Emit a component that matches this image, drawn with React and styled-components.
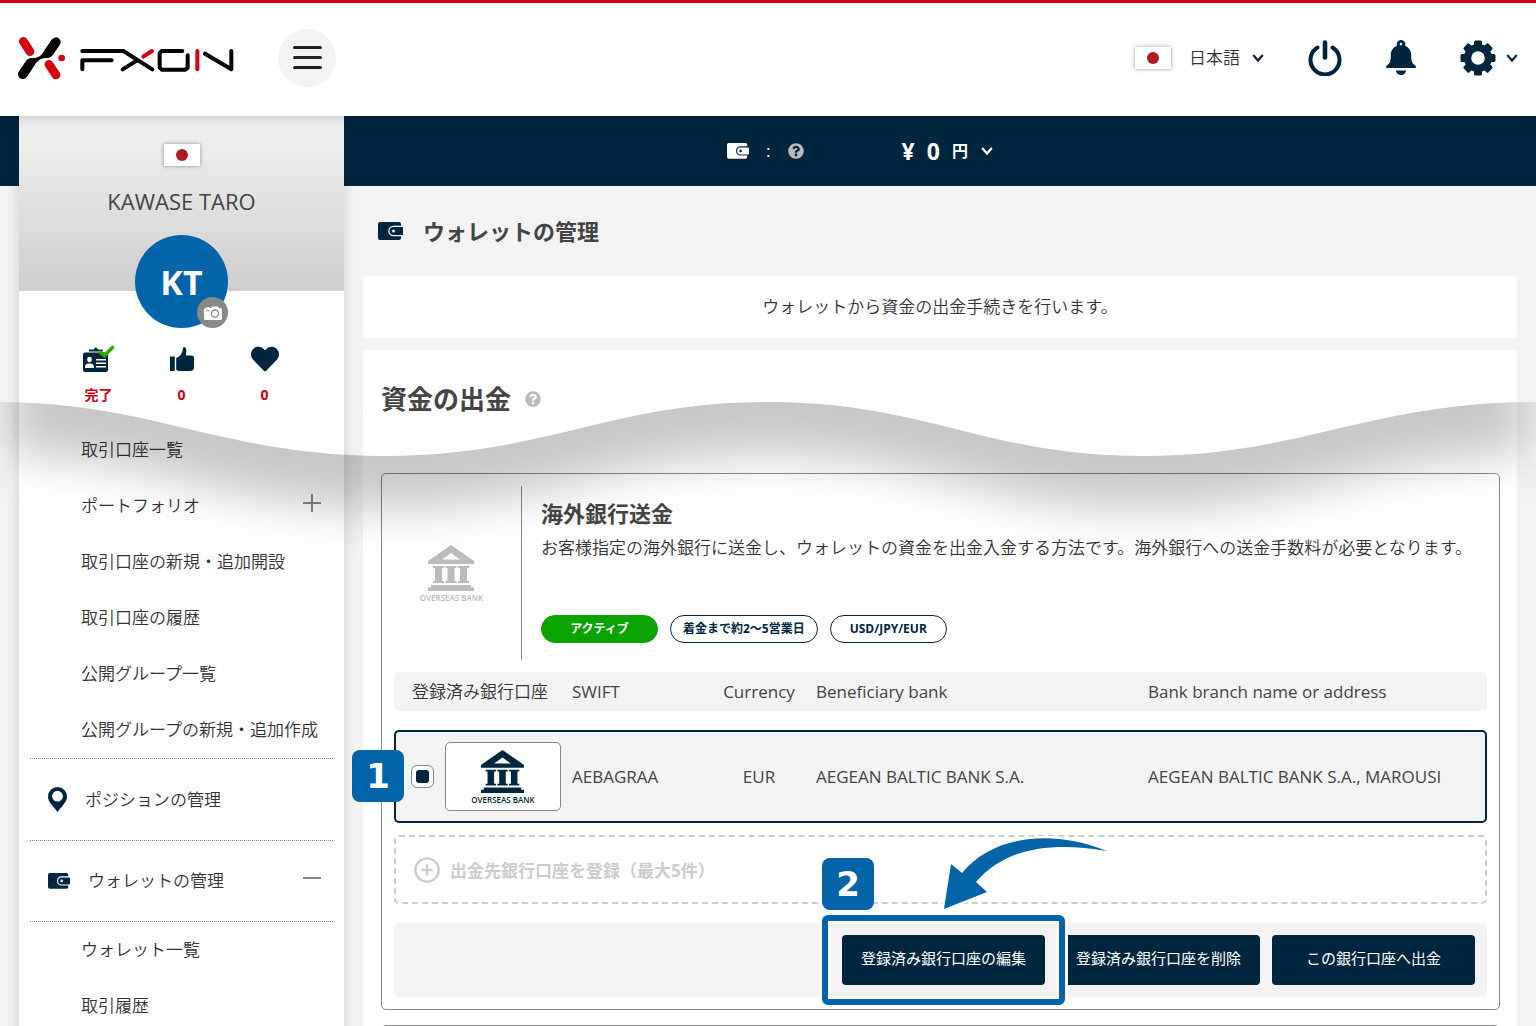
import styled, { createGlobalStyle } from "styled-components";
import { FaHeart, FaQuestionCircle } from "react-icons/fa";
import { CirclePlus } from "lucide-react";

const subMenu = [
  { label: "取引口座一覧" },
  { label: "ポートフォリオ", expandable: true },
  { label: "取引口座の新規・追加開設" },
  { label: "取引口座の履歴" },
  { label: "公開グループ一覧" },
  { label: "公開グループの新規・追加作成" },
];

const walletMenu = [{ label: "ウォレット一覧" }, { label: "取引履歴" }];

const accounts = [
  {
    swift: "AEBAGRAA",
    currency: "EUR",
    bank: "AEGEAN BALTIC BANK S.A.",
    branch: "AEGEAN BALTIC BANK S.A., MAROUSI",
  },
];

export default function App() {
  return (
    <Page>
      <GlobalStyle />
      <Header />
      <Body>
        <Sidebar />
        <Main>
          <BalanceBar>
            <BalanceLabel>
              <WalletIcon width="22" hole="#00263f" />
              <span>:</span>
              <HelpIcon size="16" />
            </BalanceLabel>
            <Balance>
              <strong>¥</strong>
              <strong>0</strong>
              <SelectBox>
                <CurrencySelect aria-label="通貨">
                  <option>円</option>
                </CurrencySelect>
                <Chevron />
              </SelectBox>
            </Balance>
          </BalanceBar>

          <PageTitle>
            <WalletIcon width="25" hole="#f3f3f3" />
            <h1>ウォレットの管理</h1>
          </PageTitle>

          <Notice>ウォレットから資金の出金手続きを行います。</Notice>

          <Panel>
            <PanelTitle>
              <h2>資金の出金</h2>
              <HelpIcon size="16" />
            </PanelTitle>
            <BankCard />
            <NextCard />
          </Panel>
        </Main>
      </Body>
      <WaveShadow />
    </Page>
  );
}

function Header() {
  return (
    <TopBar>
      <LogoLink href="#" aria-label="FXON">
        <Logo />
      </LogoLink>
      <MenuButton aria-label="メニュー">
        <span />
        <span />
        <span />
      </MenuButton>
      <HeaderTools>
        <Flag />
        <SelectBox>
          <LanguageSelect aria-label="言語">
            <option>日本語</option>
          </LanguageSelect>
          <Chevron />
        </SelectBox>
        <ToolButton aria-label="ログアウト">
          <PowerIcon />
        </ToolButton>
        <ToolButton aria-label="お知らせ">
          <BellIcon />
        </ToolButton>
        <ToolButton aria-label="設定">
          <GearIcon />
          <Chevron />
        </ToolButton>
      </HeaderTools>
    </TopBar>
  );
}

function Sidebar() {
  return (
    <Side>
      <Profile>
        <Flag />
        <UserName>KAWASE TARO</UserName>
        <Avatar>
          KT
          <CameraButton aria-label="写真を変更">
            <CameraIcon />
          </CameraButton>
        </Avatar>
      </Profile>

      <Stats>
        <Stat>
          <IdCardIcon />
          <span>完了</span>
        </Stat>
        <Stat>
          <ThumbIcon />
          <span>0</span>
        </Stat>
        <Stat>
          <FaHeart size={28} />
          <span>0</span>
        </Stat>
      </Stats>

      <Menu>
        {subMenu.map((item) => (
          <SubItem href="#" key={item.label}>
            {item.label}
            {item.expandable && <Toggle $plus />}
          </SubItem>
        ))}
        <MenuItem href="#">
          <PinIcon />
          ポジションの管理
        </MenuItem>
        <MenuItem href="#" $last>
          <WalletIcon width="22" hole="#ffffff" />
          ウォレットの管理
          <Toggle />
        </MenuItem>
        {walletMenu.map((item) => (
          <SubItem href="#" key={item.label}>
            {item.label}
          </SubItem>
        ))}
      </Menu>
    </Side>
  );
}

function BankCard() {
  return (
    <Card>
      <CardHead>
        <CardLogo>
          <BankLogo size={46} />
        </CardLogo>
        <CardInfo>
          <h3>海外銀行送金</h3>
          <p>
            お客様指定の海外銀行に送金し、ウォレットの資金を出金入金する方法です。海外銀行への送金手数料が必要となります。
          </p>
          <Tags>
            <Tag $active>アクティブ</Tag>
            <Tag>着金まで約2〜5営業日</Tag>
            <Tag>USD/JPY/EUR</Tag>
          </Tags>
        </CardInfo>
      </CardHead>

      <TableWrap>
        <AccountTable>
          <colgroup>
            <Col $w="168px" />
            <Col $w="150px" />
            <Col $w="94px" />
            <Col $w="332px" />
            <Col />
          </colgroup>
          <thead>
            <tr>
              <th>登録済み銀行口座</th>
              <th>SWIFT</th>
              <th>Currency</th>
              <th>Beneficiary bank</th>
              <th>Bank branch name or address</th>
            </tr>
          </thead>
          <tbody>
            {accounts.map((account) => (
              <tr key={account.swift}>
                <td>
                  <AccountPick>
                    <Check
                      type="checkbox"
                      defaultChecked
                      aria-label={account.bank}
                    />
                    <LogoFrame>
                      <BankLogo size={43} />
                    </LogoFrame>
                  </AccountPick>
                </td>
                <td>{account.swift}</td>
                <td>{account.currency}</td>
                <td>{account.bank}</td>
                <td>{account.branch}</td>
              </tr>
            ))}
          </tbody>
        </AccountTable>
        <RowStep>1</RowStep>
      </TableWrap>

      <AddButton>
        <CirclePlus size={28} strokeWidth={2} />
        出金先銀行口座を登録（最大5件）
      </AddButton>

      <Actions>
        <Highlighted>
          <ActionButton>登録済み銀行口座の編集</ActionButton>
          <Frame />
          <EditStep>2</EditStep>
          <ArrowIcon viewBox="-4 -4 172 78" aria-hidden="true">
            <path d="M0 69 L7 24 L18 33 C45 0 100 -14 163 11 C105 1 60 9 32 42 L43 52 Z" />
          </ArrowIcon>
        </Highlighted>
        <ActionButton>登録済み銀行口座を削除</ActionButton>
        <ActionButton>この銀行口座へ出金</ActionButton>
      </Actions>
    </Card>
  );
}

function BankLogo({ size }) {
  return (
    <BankMark>
      <svg width={size} height={size} viewBox="0 0 46 46" fill="currentColor">
        <path
          fillRule="evenodd"
          d="M23 0 L46 16 V19 H0 V16 Z M23 8 L14 14.500 H32 Z"
        />
        <path d="M5 21h11v2h-2v13h2v2H5v-2h2V23H5zM17.500 21h11v2h-2v13h2v2h-11v-2h2V23h-2zM30 21h11v2h-2v13h2v2H30v-2h2V23h-2z" />
        <path d="M3 40h40v2.500h3V46H0v-3.500h3z" />
      </svg>
      <span>OVERSEAS BANK</span>
    </BankMark>
  );
}

function Logo() {
  return (
    <svg width="216" height="44" viewBox="56 108 648 132" fill="none">
      <g stroke="#d7000f" strokeWidth="26" strokeLinecap="round">
        <line x1="72" y1="124" x2="92" y2="155" />
        <line x1="149" y1="193" x2="170" y2="225" />
      </g>
      <g stroke="#000" strokeWidth="28" strokeLinecap="round">
        <line x1="170" y1="126" x2="147" y2="159" />
        <line x1="70" y1="223" x2="93" y2="189" />
      </g>
      <g fill="#000">
        <path d="M158 118 L130 160 Q121 173 100 176 L146 173 Q154 171 159 165 L180 135 Z" />
        <path d="M82 231 L110 189 Q119 176 140 173 L94 175 Q86 177 81 183 L60 213 Z" />
      </g>
      <circle cx="187" cy="174" r="10" fill="#d7000f" />
      <g
        stroke="#000"
        strokeWidth="12"
        strokeLinecap="round"
        strokeLinejoin="round"
      >
        <polyline points="249,153 372,153 459,208" />
        <polyline points="337,181 249,181 249,208" />
        <line x1="370" y1="208" x2="412" y2="182" />
        <polyline points="549,153 487,153 481,159 481,203 487,209 558,209 565,203 565,166" />
        <polyline points="617,161 696,208 696,153" />
      </g>
      <g stroke="#d7000f" strokeWidth="12" strokeLinecap="round">
        <line x1="432" y1="170" x2="458" y2="153" />
        <line x1="594" y1="153" x2="594" y2="208" />
      </g>
    </svg>
  );
}

function Flag() {
  return (
    <FlagBox>
      <svg width="12" height="12" viewBox="0 0 12 12">
        <circle cx="6" cy="6" r="6" fill="#ae1c22" />
      </svg>
    </FlagBox>
  );
}

function Chevron() {
  return (
    <svg width="12" height="10" viewBox="0 0 12 10" fill="none">
      <path d="M1.200 2 L6 7.500 L10.800 2" stroke="currentColor" strokeWidth="2.200" />
    </svg>
  );
}

function WalletIcon({ width, hole }) {
  return (
    <svg width={width} viewBox="0 0 25 18" fill="currentColor">
      <path d="M2 0h19a2 2 0 0 1 2 2v14a2 2 0 0 1-2 2H2a2 2 0 0 1-2-2V2a2 2 0 0 1 2-2z" />
      <path
        d="M25 3.700H15.500a5.200 5.200 0 0 0 0 10.600H25z"
        fill={hole}
      />
      <path d="M24 5H15.500a4 4 0 0 0 0 8H24a1 1 0 0 0 1-1V6a1 1 0 0 0-1-1z" />
      <circle cx="15.500" cy="9" r="1.500" fill={hole} />
    </svg>
  );
}

function PowerIcon() {
  return (
    <svg width="34" height="36" viewBox="0 0 34 36" fill="none">
      <g stroke="currentColor" strokeWidth="4" strokeLinecap="round">
        <path d="M9.500 7.500a14.500 14.500 0 1 0 15 0" />
        <path d="M17 2.500v15" strokeWidth="4.600" />
      </g>
    </svg>
  );
}

function BellIcon() {
  return (
    <svg width="30" height="36" viewBox="0 0 30 36" fill="currentColor">
      <path
        fillRule="evenodd"
        d="M15 0a4.200 4.200 0 0 1 4 5.800c4 1.700 6.200 5 6.200 9.200 0 6 .8 8.500 4 10.500.5.400.8.900.8 1.500 0 .7-.4 1-1 1H1c-.6 0-1-.3-1-1 0-.6.300-1.100.8-1.500 3.200-2 4-4.500 4-10.500 0-4.200 2.200-7.500 6.200-9.200A4.200 4.200 0 0 1 15 0zm0 2.800a1.300 1.300 0 1 0 0 2.600 1.300 1.300 0 0 0 0-2.600z"
      />
      <path d="M10 30.500h10a5 4.500 0 0 1-10 0z" />
    </svg>
  );
}

function GearIcon() {
  return (
    <svg width="36" height="36" viewBox="-18 -18 36 36" fill="currentColor">
      {[0, 45, 90, 135].map((angle) => (
        <rect
          key={angle}
          x="-4"
          y="-17.500"
          width="8"
          height="35"
          rx="1.500"
          transform={`rotate(${angle})`}
        />
      ))}
      <circle r="14" />
      <circle r="6.800" fill="#fff" />
    </svg>
  );
}

function IdCardIcon() {
  return (
    <svg width="32" height="28" viewBox="0 0 32 28" fill="#00263f">
      <path d="M6 6.500V4.500h5c0-1 .7-2 1.800-2s1.800 1 1.800 2h5v2z" />
      <path d="M2 7.500h21a2 2 0 0 1 2 2V25a2 2 0 0 1-2 2H2a2 2 0 0 1-2-2V9.500a2 2 0 0 1 2-2z" />
      <g fill="#fff">
        <ellipse cx="6.500" cy="14.500" rx="2.300" ry="2.700" />
        <path d="M2 23c0-3.500 1.500-4.500 4.500-4.500S11 19.500 11 23z" />
        <rect x="13" y="14" width="10" height="1.500" />
        <rect x="13" y="17.500" width="10" height="1.500" />
        <rect x="13" y="21" width="10" height="1.500" />
      </g>
      <path
        d="M17 7 L21.500 10.500 L29.500 2.500"
        fill="none"
        stroke="#2fa908"
        strokeWidth="3.600"
        strokeLinecap="round"
      />
    </svg>
  );
}

function ThumbIcon() {
  return (
    <svg width="24" height="24" viewBox="0 0 24 24" fill="currentColor">
      <path d="M0 9.500h4.800V24H0z" />
      <path d="M6.200 11c2.800-1 5-3 6-6 .5-1.700.6-3.300 1-4.400.3-.7 1-.8 1.700-.4C16.500 1.300 16.800 4 15.800 8.500H21a3 3 0 0 1 3 3V20a4 4 0 0 1-4 4H9c-1.600 0-2.800-.8-2.800-2z" />
    </svg>
  );
}

function CameraIcon() {
  return (
    <svg width="18" height="14" viewBox="0 0 18 14" fill="#fff">
      <path d="M1.500 2h1V1h3v1h1.500L8.200.5h5.600L15 2h1.500A1.500 1.500 0 0 1 18 3.500v9a1.500 1.500 0 0 1-1.500 1.500h-15A1.500 1.500 0 0 1 0 12.500v-9A1.500 1.500 0 0 1 1.500 2z" />
      <circle cx="11" cy="7.600" r="3.600" fill="none" stroke="#888" strokeWidth="1.300" />
      <rect x="2" y="4.200" width="3.600" height="1" fill="#888" />
    </svg>
  );
}

function PinIcon() {
  return (
    <svg width="19" height="25" viewBox="0 0 19 25" fill="currentColor">
      <path
        fillRule="evenodd"
        d="M9.500 0a9.500 9.500 0 0 1 9.500 9.500c0 5.500-5 9.500-9.500 15.500C5 19 0 15 0 9.500A9.500 9.500 0 0 1 9.500 0zm0 3.800a5.400 5.400 0 1 0 0 10.800 5.400 5.400 0 0 0 0-10.800z"
      />
    </svg>
  );
}

function WaveShadow() {
  return (
    <Wave viewBox="0 0 1536 200" preserveAspectRatio="none" aria-hidden="true">
      <defs>
        <clipPath id="below">
          <path d="M0 0 C150 0 225 54 385 54 S610 0 768 0 S985 54 1143 54 S1370 0 1536 0 V200 H0 Z" />
        </clipPath>
        <filter id="soft" x="-10%" y="-100%" width="120%" height="300%">
          <feGaussianBlur stdDeviation="24" />
        </filter>
      </defs>
      <g clipPath="url(#below)">
        <path
          d="M10 -100 V52 C150 52 225 106 385 106 S610 52 768 52 S985 106 1143 106 S1370 52 1526 52 V-100 Z"
          fill="#000"
          fillOpacity="0.22"
          filter="url(#soft)"
        />
      </g>
    </Wave>
  );
}

const GlobalStyle = createGlobalStyle`
  * {
    box-sizing: border-box;
  }

  body {
    margin: 0;
    background-color: #f3f3f3;
    color: #444444;
    font-family: "Open Sans", "Noto Sans CJK JP", sans-serif;
    font-size: 17px;
    line-height: 24px;
  }

  h1, h2, h3, p {
    margin: 0;
  }

  a {
    color: inherit;
    text-decoration: none;
  }

  button, select {
    font-family: inherit;
    color: inherit;
    border: none;
    background: none;
    padding: 0;
    cursor: pointer;
  }

  svg {
    display: block;
    flex-shrink: 0;
  }
`;

const Page = styled.div`
  position: relative;
  height: 100vh;
  overflow: hidden;
`;

const TopBar = styled.header`
  position: relative;
  z-index: 2;
  height: 116px;
  padding: 0 18px 4px;
  display: flex;
  align-items: center;
  background-color: #ffffff;
  border-top: 3px solid #d7000f;
  box-shadow: 0 2px 12px rgba(0, 0, 0, 0.2);
`;

const LogoLink = styled.a`
  margin-right: 44px;
`;

const MenuButton = styled.button`
  width: 58px;
  height: 58px;
  display: flex;
  flex-direction: column;
  justify-content: center;
  align-items: center;
  gap: 7px;
  border-radius: 50%;
  background-color: #f3f3f3;

  span {
    width: 29px;
    height: 3px;
    border-radius: 2px;
    background-color: #222222;
  }
`;

const HeaderTools = styled.div`
  margin-left: auto;
  display: flex;
  align-items: center;
  color: #00263f;
`;

const FlagBox = styled.span`
  width: 36px;
  height: 22px;
  flex-shrink: 0;
  display: flex;
  justify-content: center;
  align-items: center;
  background-color: #ffffff;
  box-shadow: 0 0 4px rgba(0, 0, 0, 0.4);
`;

const SelectBox = styled.div`
  display: flex;
  align-items: center;
  gap: 12px;
`;

const LanguageSelect = styled.select`
  appearance: none;
  margin-left: 18px;
  color: #333333;
  font-size: 17px;
  font-weight: 350;
`;

const CurrencySelect = styled.select`
  appearance: none;
  color: #ffffff;
  font-size: 16px;
  font-weight: 700;
`;

const ToolButton = styled.button`
  margin-left: 44px;
  display: flex;
  align-items: center;
  gap: 10px;
`;

const Body = styled.div`
  display: flex;
  gap: 19px;
  padding: 0 19px;
  background: linear-gradient(#00263f 70px, #f3f3f3 70px);
`;

const Side = styled.aside`
  width: 325px;
  flex-shrink: 0;
  background-color: #ffffff;
  box-shadow: 0 0 12px rgba(0, 0, 0, 0.15);
`;

const Profile = styled.div`
  height: 175px;
  padding-top: 28px;
  display: flex;
  flex-direction: column;
  align-items: center;
  background: linear-gradient(#f3f3f3, #cecece);
`;

const UserName = styled.div`
  margin-top: 20px;
  font-size: 22px;
  line-height: 30px;
`;

const Avatar = styled.div`
  position: relative;
  width: 93px;
  height: 93px;
  margin-top: 19px;
  flex-shrink: 0;
  display: flex;
  justify-content: center;
  align-items: center;
  border-radius: 50%;
  background-color: #0364a9;
  color: #ffffff;
  font-size: 34px;
  font-weight: 700;
`;

const CameraButton = styled.button`
  position: absolute;
  right: 0;
  bottom: 0;
  width: 31px;
  height: 31px;
  display: flex;
  justify-content: center;
  align-items: center;
  border-radius: 50%;
  background-color: #888888;
`;

const Stats = styled.div`
  display: grid;
  grid-template-columns: repeat(3, 83px);
  justify-content: center;
  padding-top: 53px;
  height: 131px;
`;

const Stat = styled.div`
  display: flex;
  flex-direction: column;
  align-items: center;
  color: #00263f;

  svg {
    height: 30px;
  }

  span {
    margin-top: 9px;
    font-size: 14px;
    line-height: 24px;
    font-weight: 700;
    color: #d7000f;
  }
`;

const Menu = styled.nav`
  padding: 0 11px;
`;

const SubItem = styled.a`
  height: 56px;
  padding: 0 12px 0 51px;
  display: flex;
  align-items: center;
  justify-content: space-between;
  color: #333333;
  font-weight: 350;
  white-space: nowrap;
`;

const MenuItem = styled.a`
  height: 82px;
  padding: 0 12px 0 18px;
  display: flex;
  align-items: center;
  gap: 18px;
  border-top: 1px dotted #888888;
  border-bottom: ${(props) => (props.$last ? "1px dotted #888888" : "none")};
  color: #333333;
  font-weight: 350;

  svg {
    color: #00263f;
  }
`;

const Toggle = styled.span`
  width: 18px;
  height: 18px;
  margin-left: auto;
  margin-bottom: 6px;
  background: ${(props) =>
    props.$plus
      ? "linear-gradient(#888, #888) center / 2px 18px no-repeat, linear-gradient(#888, #888) center / 18px 2px no-repeat"
      : "linear-gradient(#888, #888) center / 18px 2px no-repeat"};
`;

const Main = styled.main`
  flex: 1;
  min-width: 0;
`;

const BalanceBar = styled.div`
  height: 70px;
  padding-right: 160px;
  display: flex;
  justify-content: center;
  align-items: center;
  gap: 98px;
  color: #ffffff;
`;

const BalanceLabel = styled.div`
  display: flex;
  align-items: center;
  gap: 17px;
`;

const Balance = styled.div`
  display: flex;
  align-items: center;
  gap: 12px;

  strong {
    font-size: 23px;
  }
`;

const HelpIcon = styled(FaQuestionCircle)`
  color: #bbbbbb;
`;

const PageTitle = styled.div`
  height: 90px;
  padding-left: 15px;
  display: flex;
  align-items: center;
  gap: 20px;

  svg {
    color: #00263f;
  }

  h1 {
    font-size: 22px;
    line-height: 32px;
  }
`;

const Notice = styled.p`
  padding: 19px;
  text-align: center;
  background-color: #ffffff;
  border-radius: 4px;
  color: #333333;
  font-weight: 350;
`;

const Panel = styled.section`
  margin-top: 12px;
  padding: 30px 17px 30px 18px;
  background-color: #ffffff;
  border-radius: 4px;
`;

const PanelTitle = styled.div`
  display: flex;
  align-items: center;
  gap: 14px;
  margin-bottom: 55px;

  h2 {
    font-size: 26px;
    line-height: 38px;
  }
`;

const Card = styled.article`
  padding: 12px;
  border: 1px solid #888888;
  border-radius: 5px;
`;

const NextCard = styled.article`
  height: 60px;
  margin-top: 15px;
  border: 1px solid #888888;
  border-radius: 5px;
`;

const CardHead = styled.div`
  display: flex;
  min-height: 174px;
  margin-bottom: 12px;
`;

const CardLogo = styled.div`
  width: 128px;
  padding-right: 12px;
  flex-shrink: 0;
  display: flex;
  justify-content: center;
  align-items: center;
  border-right: 1px solid #888888;
  color: #bbbbbb;
`;

const CardInfo = styled.div`
  padding: 12px 0 0 19px;

  h3 {
    font-size: 22px;
    line-height: 30px;
  }

  p {
    margin: 6px 0 53px;
    line-height: 28px;
    color: #333333;
    font-weight: 350;
  }
`;

const Tags = styled.div`
  display: flex;
  gap: 12px;
`;

const Tag = styled.span`
  min-width: 117px;
  height: 28px;
  padding: 0 12px;
  display: flex;
  justify-content: center;
  align-items: center;
  border: 1px solid ${(props) => (props.$active ? "#0aa300" : "#00263f")};
  border-radius: 14px;
  background-color: ${(props) => (props.$active ? "#0aa300" : "#ffffff")};
  color: ${(props) => (props.$active ? "#ffffff" : "#00263f")};
  font-size: 12px;
  font-weight: 700;
`;

const BankMark = styled.div`
  display: flex;
  flex-direction: column;
  align-items: center;
  gap: 3px;

  span {
    font-size: 8px;
    line-height: 8px;
    font-weight: 600;
    white-space: nowrap;
  }
`;

const TableWrap = styled.div`
  position: relative;
`;

const Col = styled.col`
  width: ${(props) => props.$w || "auto"};
`;

const AccountTable = styled.table`
  width: 100%;
  table-layout: fixed;
  border-spacing: 0;

  th,
  td {
    padding: 0 10px;
    text-align: left;
    background-color: #f3f3f3;
    font-weight: 400;
    font-size: 17px;
  }

  th {
    height: 39px;
  }

  th:first-child {
    padding-left: 18px;
    padding-right: 0;
    border-radius: 5px 0 0 5px;
    color: #333333;
    font-weight: 350;
  }

  th:nth-child(3),
  td:nth-child(3) {
    padding: 0;
    text-align: center;
  }

  th:last-child {
    border-radius: 0 5px 5px 0;
  }

  tbody::before {
    content: "";
    display: block;
    height: 19px;
  }

  td {
    height: 93px;
    border: solid #00263f;
    border-width: 2px 0;
  }

  td:first-child {
    padding: 0 0 0 15px;
    border-left-width: 2px;
    border-radius: 5px 0 0 5px;
  }

  td:last-child {
    border-right-width: 2px;
    border-radius: 0 5px 5px 0;
  }
`;

const AccountPick = styled.div`
  display: flex;
  align-items: center;
  gap: 11px;
`;

const Check = styled.input`
  appearance: none;
  width: 23px;
  height: 23px;
  margin: 0;
  border: 1px solid #888888;
  border-radius: 6px;
  background-color: #ffffff;
  display: grid;
  place-items: center;

  &:checked::before {
    content: "";
    width: 13px;
    height: 13px;
    border-radius: 3px;
    background-color: #00263f;
  }
`;

const LogoFrame = styled.div`
  width: 116px;
  height: 69px;
  display: flex;
  justify-content: center;
  align-items: center;
  border: 1px solid #888888;
  border-radius: 5px;
  background-color: #ffffff;
  color: #00263f;
`;

const AddButton = styled.button`
  width: 100%;
  height: 69px;
  margin: 12px 0 19px;
  padding-left: 17px;
  display: flex;
  align-items: center;
  gap: 9px;
  border: 2px dashed #cccccc;
  border-radius: 5px;
  color: #cccccc;
  font-size: 17px;
  font-weight: 700;
`;

const Actions = styled.div`
  padding: 12px;
  display: flex;
  justify-content: flex-end;
  gap: 12px;
  background-color: #f3f3f3;
  border-radius: 5px;
`;

const ActionButton = styled.button`
  width: 203px;
  height: 50px;
  padding-bottom: 5px;
  border-radius: 4px;
  background-color: #00263f;
  color: #ffffff;
  font-size: 15px;
`;

const Highlighted = styled.div`
  position: relative;
  z-index: 1;
`;

const Frame = styled.span`
  position: absolute;
  inset: -20px;
  border: 6px solid #0364a9;
  border-radius: 6px;
  box-shadow: 0 0 0 3px #ffffff, inset 0 0 0 3px #ffffff;
  pointer-events: none;
`;

const Step = styled.span`
  position: absolute;
  width: 52px;
  height: 52px;
  display: flex;
  justify-content: center;
  align-items: center;
  border-radius: 8px;
  background-color: #0364a9;
  color: #ffffff;
  font-family: "DejaVu Sans", sans-serif;
  font-size: 34px;
  font-weight: 700;
`;

const RowStep = styled(Step)`
  left: -42px;
  bottom: 21px;
`;

const EditStep = styled(Step)`
  left: -20px;
  top: -77px;
`;

const ArrowIcon = styled.svg`
  position: absolute;
  left: 98px;
  top: -99px;
  width: 172px;
  height: 78px;
  fill: #0364a9;
  stroke: #ffffff;
  stroke-width: 5px;
  paint-order: stroke;
`;

const Wave = styled.svg`
  position: absolute;
  left: 0;
  top: 402px;
  width: 100%;
  height: 200px;
  pointer-events: none;
`;
